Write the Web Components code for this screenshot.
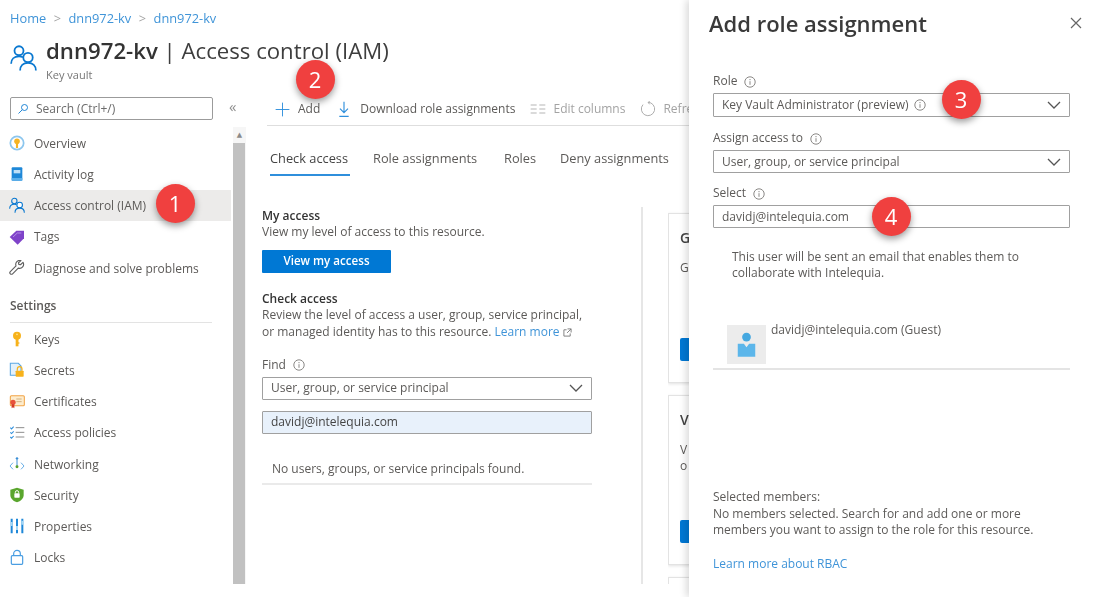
<!DOCTYPE html>
<html lang="en">
<head>
<meta charset="utf-8">
<title>dnn972-kv | Access control (IAM)</title>
<style>
	html, body { margin: 0; background: #fff; }
	body { font: 12px/16.5px "Open Sans", "Liberation Sans", sans-serif; color: #5c5a58; overflow: hidden; }
</style>
</head>
<body>
<az-app></az-app>
<script>
const ICONS = {
	people: '<circle cx="8" cy="6" r="4" fill="none" stroke="#0a78d0" stroke-width="1.6"/><path d="M1 17.500c0-4 2.700-6.500 7-6.500 1.500 0 2.600.3 3.500.8" fill="none" stroke="#0a78d0" stroke-width="1.6"/><circle cx="16" cy="12" r="4.200" fill="#fff" stroke="#0a78d0" stroke-width="1.6"/><path d="M9 23.500c0-4.200 2.700-6.800 7-6.800s7 2.600 7 6.800" fill="none" stroke="#0a78d0" stroke-width="1.6"/>',
	vault: '<circle cx="12" cy="12" r="10" fill="#fff" stroke="#8cc6ee" stroke-width="2.600"/><circle cx="12" cy="9.500" r="4.200" fill="#f5b324"/><rect x="10.400" y="11" width="3.200" height="8.500" fill="#f5b324"/>',
	log: '<rect x="4" y="2" width="16" height="20" rx="1.500" fill="#1e88d8"/><rect x="7" y="6" width="10" height="5" fill="#bfe0f7"/><rect x="4" y="18" width="16" height="4" fill="#5db0ea"/>',
	tag: '<path d="M1 12 11 2.500h11.500V14L13 23.500z" fill="#7f43c9"/><path d="M6 12 12.500 6h6" fill="none" stroke="#b48ae6" stroke-width="1.500"/>',
	wrench: '<path d="M21 3.500l-3.800 3.600-2.500-.5-.5-2.500L18 1a6 6 0 0 0-7.500 7.800L2 17.300a2.400 2.400 0 0 0 3.400 3.400l8.500-8.500A6 6 0 0 0 21 3.500z" fill="none" stroke="#5f5f5f" stroke-width="1.700" stroke-linejoin="round"/>',
	key: '<circle cx="12" cy="7" r="6" fill="#f7b21b"/><rect x="10" y="11" width="4.200" height="12" fill="#f7b21b"/><rect x="13" y="17" width="2.600" height="2" fill="#f7b21b"/><circle cx="12" cy="5" r="1.400" fill="#fde08a"/>',
	secret: '<path d="M2 2h12l4 4v14H2z" fill="#e4f1fb" stroke="#5ba8e4" stroke-width="1.600"/><rect x="10" y="13" width="12" height="9" rx="1" fill="#f7b21b"/><path d="M12.500 13v-2.500a3.500 3.500 0 0 1 7 0V13" fill="none" stroke="#f7b21b" stroke-width="1.800"/>',
	cert: '<rect x="2" y="4" width="21" height="15" rx="1.500" fill="#fdeccd" stroke="#f2a548" stroke-width="1.600"/><path d="M11 9h8M11 13h8" stroke="#c9a26b" stroke-width="1.200"/><circle cx="6" cy="14" r="4" fill="#e8523a"/><path d="M4 17v6l2-1.500L8 23v-6z" fill="#d23a28"/>',
	policy: '<path d="M2 4l1.800 1.800L7 2.500M2 11l1.800 1.800L7 9.500M2 18l1.800 1.800L7 16.500" fill="none" stroke="#2f8fdc" stroke-width="1.600"/><path d="M10 4h13M10 11h13M10 18h13" stroke="#8d8d8d" stroke-width="1.500"/>',
	network: '<path d="M6 10 1.500 15 6 20M18 10l4.500 5-4.500 5" fill="none" stroke="#68aee6" stroke-width="1.500"/><path d="M12 4v11" stroke="#3b8fd6" stroke-width="1.500"/><circle cx="12" cy="3.500" r="1.800" fill="#3b8fd6"/><circle cx="12" cy="16" r="2.200" fill="#5aa02c"/>',
	shield: '<path d="M12 1 22 4v8c0 5.500-4.500 9-10 11C6.500 21 2 17.500 2 12V4z" fill="#5aa62e"/><rect x="8" y="9.500" width="8" height="6.500" rx="1" fill="#fff"/><path d="M9.500 9.500V8a2.500 2.500 0 0 1 5 0v1.500" fill="none" stroke="#fff" stroke-width="1.500"/>',
	props: '<path d="M4 1v22M12 1v22M20 1v22" stroke="#1e88d8" stroke-width="3"/><path d="M4 6v6M12 12v6M20 4v6" stroke="#a5d8f7" stroke-width="3"/>',
	lock: '<rect x="3.500" y="10" width="17" height="13" rx="1.500" fill="none" stroke="#4a9ee2" stroke-width="1.800"/><path d="M7 10V7a5 5 0 0 1 10 0v3" fill="none" stroke="#4a9ee2" stroke-width="1.800"/>',
	search: '<circle cx="15" cy="9" r="6" fill="none" stroke="#0a78d0" stroke-width="1.800"/><path d="M10.500 13.500 3 21" stroke="#0a78d0" stroke-width="1.800"/>',
	plus: '<path d="M12 1v22M1 12h22" stroke="#2f8fdc" stroke-width="1.500"/>',
	download: '<path d="M12 1v16M6 11.500l6 6 6-6M5 23h14" fill="none" stroke="#2f8fdc" stroke-width="1.700"/>',
	columns: '<path d="M1 6h9M1 12h9M1 18h9M14 6h9M14 12h9M14 18h9" stroke="#b5b5b5" stroke-width="1.500"/>',
	refresh: '<path d="M12 2A10 10 0 1 1 4.500 5.400M15 1 12 2l2.500 3" fill="none" stroke="#adadad" stroke-width="1.500"/>'
};

function icon(name, w, h) {
	return `<svg viewBox="0 0 24 24" width="${w}" height="${h || w}" aria-hidden="true">${ICONS[name]}</svg>`;
}

const INFO = '<svg viewBox="0 0 12 12" width="12" height="12" aria-hidden="true"><circle cx="6" cy="6" r="5.200" fill="none" stroke="#8a8886"/><path d="M6 5.200v3.600M6 3v1.200" stroke="#8a8886"/></svg>';

class AzBadge extends HTMLElement {
	constructor() {
		super();
		this.attachShadow({ mode: 'open' }).innerHTML = `
			<style>
				:host {
					position: absolute;
					left: calc(var(--x) * 1px - 19.5px);
					top: calc(var(--y) * 1px - 19.5px);
					width: 39px;
					height: 39px;
					border-radius: 50%;
					background: #f0403f;
					color: #fff;
					font: 22px/39px "Open Sans", sans-serif;
					text-align: center;
					box-shadow: 0 3px 7px rgba(0,0,0,.4);
					z-index: 5;
				}
			</style>
			<slot></slot>`;
	}
}

class AzNavItem extends HTMLElement {
	constructor() {
		super();
		this.attachShadow({ mode: 'open' }).innerHTML = `
			<style>
				:host { display: flex; align-items: center; height: 31.2px; padding-left: 9px; gap: 8px; }
				:host([active]) { background: #ecebea; }
				svg { flex: none; }
				.i { width: 17px; display: flex; }
				.t { padding-top: 2px; }
			</style>
			<span class="i">${icon(this.getAttribute('icon'), 16)}</span><span class="t"><slot></slot></span>`;
	}
}

class AzSidebar extends HTMLElement {
	constructor() {
		super();
		this.attachShadow({ mode: 'open' }).innerHTML = `
			<style>
				:host { display: grid; grid-template-columns: 233px 13px; grid-template-rows: 31px 1fr; flex: none; width: 246px; }
				.search { margin: 1px 0 0 10px; width: 203px; height: 23px; box-sizing: border-box; border: 1px solid #9b9b9b; border-radius: 2px; display: flex; align-items: center; gap: 7px; padding: 1px 0 0 6px; color: #6b6b6b; }
				.collapse { font-size: 15px; color: #8f8f8f; margin: -1px 0 0 -4px; line-height: 23px; }
				.bar { background: #f6f6f6; position: relative; margin-top: 0; display: flex; flex-direction: column; }
				.bar i { height: 16px; display: block; text-align: center; font: 7px/16px "DejaVu Sans", sans-serif; color: #8a8a8a; }
				.bar b { flex: 1; background: #c1c1c1; margin-right: 1px; }
				nav { padding: .5px 2px 0 0; }
				h4 { margin: 0 19px 0 10px; padding: 14.5px 0 8px; font: 600 12px/16.5px "Open Sans", sans-serif; color: #5c5a58; border-bottom: 1px solid #e3e3e3; }
			</style>
			<div class="search">${icon('search', 12)}<span>Search (Ctrl+/)</span></div>
			<div class="collapse">«</div>
			<nav>
				<az-nav-item icon="vault">Overview</az-nav-item>
				<az-nav-item icon="log">Activity log</az-nav-item>
				<az-nav-item icon="people" active>Access control (IAM)</az-nav-item>
				<az-nav-item icon="tag">Tags</az-nav-item>
				<az-nav-item icon="wrench">Diagnose and solve problems</az-nav-item>
				<h4>Settings</h4>
				<az-nav-item icon="key">Keys</az-nav-item>
				<az-nav-item icon="secret">Secrets</az-nav-item>
				<az-nav-item icon="cert">Certificates</az-nav-item>
				<az-nav-item icon="policy">Access policies</az-nav-item>
				<az-nav-item icon="network">Networking</az-nav-item>
				<az-nav-item icon="shield">Security</az-nav-item>
				<az-nav-item icon="props">Properties</az-nav-item>
				<az-nav-item icon="lock">Locks</az-nav-item>
			</nav>
			<div class="bar"><i>▲</i><b></b></div>`;
	}
}

class AzHeader extends HTMLElement {
	constructor() {
		super();
		this.attachShadow({ mode: 'open' }).innerHTML = `
			<style>
				:host { display: block; height: 96px; box-sizing: border-box; padding: 10px 0 0 10px; }
				.crumbs { display: flex; height: 17px; font-size: 12.8px; line-height: 17px; color: #3f94d8; gap: 7.5px; }
				.crumbs span { color: #a5a5a5; }
				.title { display: flex; gap: 9px; margin-top: 12px; }
				svg { margin-top: 5px; flex: none; }
				h1 { margin: 0; font: 400 22.2px/24px "Open Sans", sans-serif; color: #3e3e3e; white-space: nowrap; }
				h1 b { font-weight: 600; color: #333; }
				small { display: block; font-size: 11px; line-height: 14px; margin-top: 5px; color: #777; }
			</style>
			<div class="crumbs">Home <span>&gt;</span> dnn972-kv <span>&gt;</span> dnn972-kv</div>
			<div class="title">
				${icon('people', 27)}
				<div><h1><b>dnn972-kv</b> | Access control (IAM)</h1><small>Key vault</small></div>
			</div>`;
	}
}

class AzToolbar extends HTMLElement {
	constructor() {
		super();
		this.attachShadow({ mode: 'open' }).innerHTML = `
			<style>
				:host { display: flex; align-items: center; height: 30px; margin-left: 21px; box-sizing: border-box; padding: 0 0 3px 8px; border-bottom: 1px solid #dedede; white-space: nowrap; }
				span { display: flex; align-items: center; }
				.off { color: #a3a3a3; }
			</style>
			<span style="gap:8px">${icon('plus', 15)}Add</span>
			<span style="gap:8px;margin-left:16px">${icon('download', 16)}Download role assignments</span>
			<span class="off" style="gap:7px;margin-left:15px">${icon('columns', 16)}Edit columns</span>
			<span class="off" style="gap:7px;margin-left:15px">${icon('refresh', 16)}Refresh</span>`;
	}
}

class AzTabs extends HTMLElement {
	constructor() {
		super();
		this.attachShadow({ mode: 'open' }).innerHTML = `
			<style>
				:host { display: flex; margin-left: 24px; padding-top: 24px; font-size: 12.8px; white-space: nowrap; }
				span { padding-bottom: 7px; border-bottom: 2px solid transparent; }
				.on { color: #444; border-bottom-color: #2f8fdc; width: 80px; }
			</style>
			<span class="on">Check access</span>
			<span style="margin-left:23px;width:131px">Role assignments</span>
			<span style="width:56px">Roles</span>
			<span>Deny assignments</span>`;
	}
}

class AzSelect extends HTMLElement {
	constructor() {
		super();
		this.attachShadow({ mode: 'open' }).innerHTML = `
			<style>
				:host { display: flex; align-items: center; justify-content: space-between; height: 23px; box-sizing: border-box; border: 1px solid #a0a0a0; border-radius: 1px; padding: 0 8px; background: #fff; white-space: nowrap; }
				:host([filled]) { background: #e8f1fb; color: #444; }
				:host([tall]) { height: 24px; }
				svg { flex: none; }
				.v { display: flex; align-items: center; gap: 5px; }
			</style>
			<span class="v"><slot></slot></span>
			<svg viewBox="0 0 14 8" width="14" height="8" style="display:${this.hasAttribute('input') ? 'none' : 'block'}"><path d="M1 1l6 6 6-6" fill="none" stroke="#555" stroke-width="1.300"/></svg>`;
	}
}

class AzLabel extends HTMLElement {
	constructor() {
		super();
		this.attachShadow({ mode: 'open' }).innerHTML = `
			<style>
				:host { display: flex; align-items: center; gap: 7px; height: 16.5px; margin-bottom: 3.5px; }
				svg { flex: none; }
			</style>
			<slot></slot>${INFO}`;
	}
}

// only the part left of the blade is visible in the screenshot
class AzCard extends HTMLElement {
	constructor() {
		super();
		this.attachShadow({ mode: 'open' }).innerHTML = `
			<style>
				:host { display: block; width: 300px; height: 170px; box-sizing: border-box; flex: none; border: 1px solid #e3e3e3; padding: 14px 0 0 11px; white-space: nowrap; box-shadow: 0 1px 3px rgba(0,0,0,.12); }
				h3 { margin: 0; font: 600 14px/20px "Open Sans", sans-serif; color: #444; }
				p { margin: 12px 0 0; height: 50px; }
				button { display: block; margin-top: 28px; width: 120px; height: 23px; background: #0078d4; border: 0; border-radius: 2px; padding: 0; }
			</style>
			<h3><slot name="title"></slot></h3>
			<p><slot></slot></p>
			<button></button>`;
	}
}

class AzMain extends HTMLElement {
	constructor() {
		super();
		this.attachShadow({ mode: 'open' }).innerHTML = `
			<style>
				:host { display: block; flex: 1; min-width: 0; overflow: hidden; }
				.body { display: flex; margin: 31px 0 0 16px; height: 378px; }
				.left { width: 330px; flex: none; padding-top: 1px; }
				.rule { width: 2px; background: #e6e6e6; margin-left: 49px; flex: none; }
				.right { margin-left: 25px; padding-top: 6px; display: flex; flex-direction: column; gap: 12px; overflow: hidden; }
				h5 { margin: 0; font: 600 12px/16.5px "Open Sans", sans-serif; color: #333; }
				p { margin: 0; }
				.btn { margin-top: 9px; width: 129px; height: 23px; background: #0078d4; color: #fff; border-radius: 1px; text-align: center; font-size: 11.6px; line-height: 22px; font-weight: 600; }
				a { color: #3f94d8; text-decoration: none; }
				a svg { vertical-align: -1px; }
				.none { margin-top: 27px; padding: 0 0 6px 10px; border-bottom: 2px solid #eaeaea; }
			</style>
			<az-toolbar></az-toolbar>
			<az-tabs></az-tabs>
			<div class="body">
				<div class="left">
					<h5>My access</h5>
					<p>View my level of access to this resource.</p>
					<div class="btn">View my access</div>
					<h5 style="margin-top:18px">Check access</h5>
					<p>Review the level of access a user, group, service principal,<br>or managed identity has to this resource. <a href="#">Learn more <svg viewBox="0 0 10 10" width="9" height="9"><path d="M4 2H1v7h7V6M5 1h4v4M9 1 4.500 5.500" fill="none" stroke="#777"/></svg></a></p>
					<div style="height:16.5px"></div>
					<az-label>Find</az-label>
					<az-select>User, group, or service principal</az-select>
					<div style="height:11px"></div>
					<az-select filled input>davidj@intelequia.com</az-select>
					<div class="none">No users, groups, or service principals found.</div>
				</div>
				<div class="rule"></div>
				<div class="right">
					<az-card><span slot="title">G</span>G</az-card>
					<az-card><span slot="title">V</span>V<br>o</az-card>
					<az-card></az-card>
				</div>
			</div>`;
	}
}

class AzBlade extends HTMLElement {
	constructor() {
		super();
		this.attachShadow({ mode: 'open' }).innerHTML = `
			<style>
				:host { display: block; flex: none; width: 423px; height: 597px; box-sizing: border-box; padding: 9px 42px 0 24px; background: #fff; box-shadow: -3px 0 7px rgba(0,0,0,.14); position: relative; z-index: 2; }
				header { display: flex; justify-content: space-between; align-items: center; margin-left: -4px; margin-right: -20px; height: 29px; }
				h2 { margin: 0; font: 600 22px/29px "Open Sans", sans-serif; color: #3a3a3a; white-space: nowrap; }
				.x { display: flex; margin-right: 8px; margin-top: -2px; }
				.form { margin-top: 35.25px; }
				.note { margin: 20.5px 0 0 19px; width: 310px; }
				.member { margin-top: 41px; height: 45px; border-bottom: 2px solid #e4e4e4; display: flex; padding-left: 14px; gap: 5px; align-items: flex-start; }
				.member span:last-child { margin-top: -1px; }
				.avatar { margin-top: 2px; width: 39px; height: 39px; background: #ececec; display: flex; align-items: center; justify-content: center; flex: none; }
				.sel { margin-top: 119.5px; }
				a { display: block; margin-top: 17px; color: #3f94d8; text-decoration: none; }
			</style>
			<header>
				<h2>Add role assignment</h2>
				<span class="x"><svg viewBox="0 0 12 12" width="12" height="12"><path d="M1 1l10 10M11 1 1 11" stroke="#666" stroke-width="1.200"/></svg></span>
			</header>
			<div class="form">
				<az-label>Role</az-label>
				<az-select tall>Key Vault Administrator (preview) ${INFO}</az-select>
				<div style="height:13px"></div>
				<az-label>Assign access to</az-label>
				<az-select>User, group, or service principal</az-select>
				<div style="height:12px"></div>
				<az-label>Select</az-label>
				<az-select input>davidj@intelequia.com</az-select>
			</div>
			<p class="note">This user will be sent an email that enables them to<br>collaborate with Intelequia.</p>
			<div class="member">
				<span class="avatar"><svg viewBox="0 0 24 30" width="21" height="27"><circle cx="12" cy="6.500" r="5" fill="#45a8e0"/><path d="M2 14h7l3 4 3-4h7v15H2z" fill="#5cb6ea"/></svg></span>
				<span>davidj@intelequia.com (Guest)</span>
			</div>
			<div class="sel">Selected members:<br>No members selected. Search for and add one or more<br>members you want to assign to the role for this resource.</div>
			<a href="#">Learn more about RBAC</a>`;
	}
}

class AzApp extends HTMLElement {
	constructor() {
		super();
		this.attachShadow({ mode: 'open' }).innerHTML = `
			<style>
				:host { display: flex; position: relative; width: 1112px; height: 597px; overflow: hidden; filter: blur(.4px); }
				.page { width: 689px; flex: none; height: 584px; overflow: hidden; display: flex; flex-direction: column; }
				.row { display: flex; flex: 1; min-height: 0; }
			</style>
			<div class="page">
				<az-header></az-header>
				<div class="row">
					<az-sidebar></az-sidebar>
					<az-main></az-main>
				</div>
			</div>
			<az-blade></az-blade>
			<az-badge style="--x:175;--y:203">1</az-badge>
			<az-badge style="--x:315;--y:79">2</az-badge>
			<az-badge style="--x:961;--y:99">3</az-badge>
			<az-badge style="--x:891;--y:216">4</az-badge>`;
	}
}

customElements.define('az-badge', AzBadge);
customElements.define('az-nav-item', AzNavItem);
customElements.define('az-sidebar', AzSidebar);
customElements.define('az-header', AzHeader);
customElements.define('az-toolbar', AzToolbar);
customElements.define('az-tabs', AzTabs);
customElements.define('az-select', AzSelect);
customElements.define('az-label', AzLabel);
customElements.define('az-card', AzCard);
customElements.define('az-main', AzMain);
customElements.define('az-blade', AzBlade);
customElements.define('az-app', AzApp);
</script>
</body>
</html>
